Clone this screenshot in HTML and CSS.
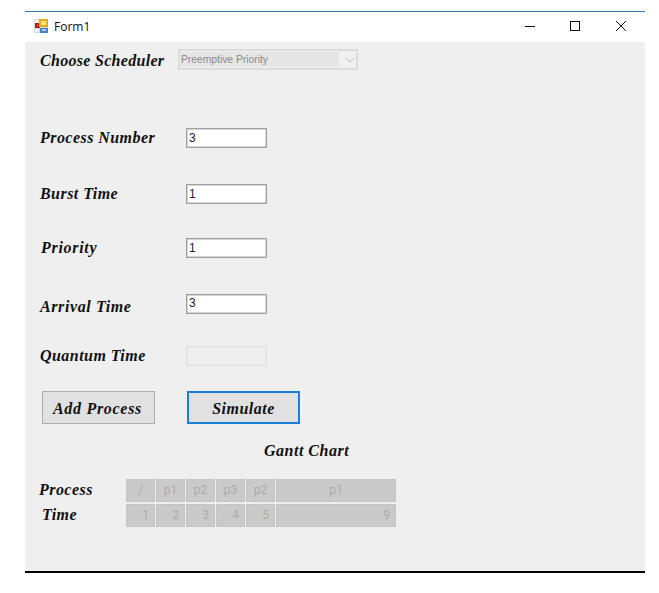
FILE: index.html
```html
<!DOCTYPE html>
<html lang="en">
<head>
<meta charset="utf-8">
<title>Form1</title>
<link rel="stylesheet" href="styles.css">
</head>
<body>
<div class="window">
  <header class="titlebar">
    <svg class="app-icon" width="14" height="14" viewBox="0 0 14 14">
      <rect x="0" y="0" width="14" height="14" fill="#d8d8d8"/>
      <rect x="1" y="1" width="4" height="3" fill="#f4f4f4"/>
      <rect x="1" y="10" width="4" height="3" fill="#f4f4f4"/>
      <rect x="1" y="4" width="5" height="5" fill="#b02020"/>
      <rect x="3" y="6" width="1" height="1" fill="#f0c0a0"/>
      <rect x="5" y="0" width="9" height="8" fill="#e8a818"/>
      <rect x="7" y="2" width="5" height="4" fill="#fbe47c"/>
      <rect x="6" y="9" width="8" height="5" fill="#4a80c8"/>
      <rect x="8" y="10" width="4" height="2" fill="#a8c8f0"/>
    </svg>
    <span class="title">Form1</span>
    <div class="controls">
      <svg width="10" height="10" viewBox="0 0 10 10"><path d="M0 5.5H10" stroke="#111" fill="none"/></svg>
      <svg width="10" height="10" viewBox="0 0 10 10"><rect x="0.5" y="0.5" width="9" height="9" stroke="#111" fill="none"/></svg>
      <svg class="control-close" width="10" height="10" viewBox="0 0 10 10"><path d="M0 0L10 10M10 0L0 10" stroke="#111" fill="none"/></svg>
    </div>
  </header>
  <main class="form">
    <div class="row row-combo">
      <span class="label label-combo">Choose Scheduler</span>
      <div class="combo">
        <span class="combo-value">Preemptive Priority</span>
        <svg class="combo-arrow" width="10" height="6" viewBox="0 0 10 6"><path d="M1 1L5 5L9 1" stroke="#bbb" fill="none"/></svg>
      </div>
    </div>
    <div class="row row-process">
      <span class="label">Process Number</span>
      <div class="field">3</div>
    </div>
    <div class="row row-burst">
      <span class="label">Burst Time</span>
      <div class="field">1</div>
    </div>
    <div class="row row-priority">
      <span class="label label-indent">Priority</span>
      <div class="field">1</div>
    </div>
    <div class="row row-arrival">
      <span class="label label-down">Arrival Time</span>
      <div class="field field-high">3</div>
    </div>
    <div class="row row-quantum">
      <span class="label">Quantum Time</span>
      <div class="field field-off"></div>
    </div>
    <div class="actions">
      <button class="btn" type="button">Add Process</button>
      <button class="btn btn-focus" type="button">Simulate</button>
    </div>
    <h2 class="chart-title">Gantt Chart</h2>
    <div class="chart">
      <span class="chart-label">Process</span>
      <div class="cells">
        <span class="cell">/</span><span class="cell">p1</span><span class="cell">p2</span><span class="cell">p3</span><span class="cell">p2</span><span class="cell cell-wide">p1</span>
      </div>
      <span class="chart-label chart-label-time">Time</span>
      <div class="cells">
        <span class="cell cell-end">1</span><span class="cell cell-end">2</span><span class="cell cell-end">3</span><span class="cell cell-end">4</span><span class="cell cell-end">5</span><span class="cell cell-wide cell-end">9</span>
      </div>
    </div>
  </main>
</div>
</body>
</html>
```

FILE: styles.css
```css
* { box-sizing: border-box; }
html, body { margin: 0; background: #fff; }
body { padding: 11px 0 0 25px; height: 593px; overflow: hidden; }

.window { width: 620px; border-top: 1px solid #2c7cc4; }

.titlebar { height: 30px; display: flex; align-items: center; background: #fff; padding-left: 9px; }
.app-icon { flex: none; margin-bottom: 2px; }
.title { margin: 0 0 2px 6px; font: 12px "Open Sans", "Noto Sans", sans-serif; color: #111; }
.controls { margin: 0 0 2px auto; display: flex; gap: 35px; padding-right: 19px; }
.control-close { margin-left: 1px; }

.form { height: 531px; background: #efefef; border-bottom: 2px solid #000; padding: 7px 0 0 15px; }

.row { display: flex; align-items: center; height: 20px; }
.row-combo { height: 21px; }
.row-process { margin-top: 58px; }
.row-burst { margin-top: 36px; }
.row-priority { margin-top: 34px; }
.row-arrival { margin-top: 36px; }
.row-quantum { margin-top: 32px; }

.label { width: 146px; flex: none; font: italic bold 16px "Liberation Serif", "DejaVu Serif", serif; color: #111; white-space: nowrap; letter-spacing: 0.45px; }
.label-combo { width: 138px; margin-top: 2px; letter-spacing: 0.3px; }
.label-down { margin-top: 6px; letter-spacing: 0.6px; }
.label-indent { padding-left: 1px; letter-spacing: 0.7px; }

.combo { width: 180px; height: 21px; border: 2px solid #dcdcdc; background: #f0f0f0; display: flex; align-items: center; }
.combo-value { width: 159px; height: 15px; margin-top: -1px; background: #e6e6e6; padding-left: 1px; font: 10.3px/16px "Liberation Sans", Arial, sans-serif; color: #8a8a8a; }
.combo-arrow { margin-left: 6px; }

.field { width: 81px; height: 20px; border: 1px solid #a0a0a0; box-shadow: inset 0 0 0 1px #d4d4d4; background: #fff; padding-left: 2px; font: 12px/18px "Liberation Sans", Arial, sans-serif; color: #222; }
.field-high { line-height: 16px; }
.field-off { background: #efefef; border: 1px solid #e0e0e0; box-shadow: inset 0 0 0 1px #e8e8e8; }

.actions { display: flex; gap: 32px; margin: 25px 0 0 2px; }
.btn { width: 113px; height: 33px; padding: 2px 2px 0 0; background: #e1e1e1; border: 1px solid #adadad; font: italic bold 16px "Liberation Serif", serif; color: #111; letter-spacing: 0.7px; }
.btn-focus { border: 2px solid #1a7fd4; letter-spacing: 0.5px; padding: 2px 0 0; }

.chart-title { margin: 18px 0 0 224px; font: italic bold 16px/18px "Liberation Serif", serif; color: #111; letter-spacing: 0.5px; }

.chart { display: grid; grid-template-columns: 87px 270px; row-gap: 2px; margin: 19px 0 0 -1px; align-items: center; }
.chart-label { font: italic bold 16px "Liberation Serif", serif; color: #111; letter-spacing: 0.45px; margin-bottom: 2px; }
.chart-label-time { padding-left: 3px; }

.cells { display: flex; gap: 1px; }
.cell { width: 29px; height: 23px; flex: none; background: #cacaca; border: 1px solid #c4c4c4; display: flex; align-items: center; justify-content: center; padding-bottom: 2px; font: 12px "Roboto", "Liberation Sans", sans-serif; color: #aaa; }
.cell-wide { width: 120px; }
.cell-end { justify-content: flex-end; padding-right: 5px; }
```
